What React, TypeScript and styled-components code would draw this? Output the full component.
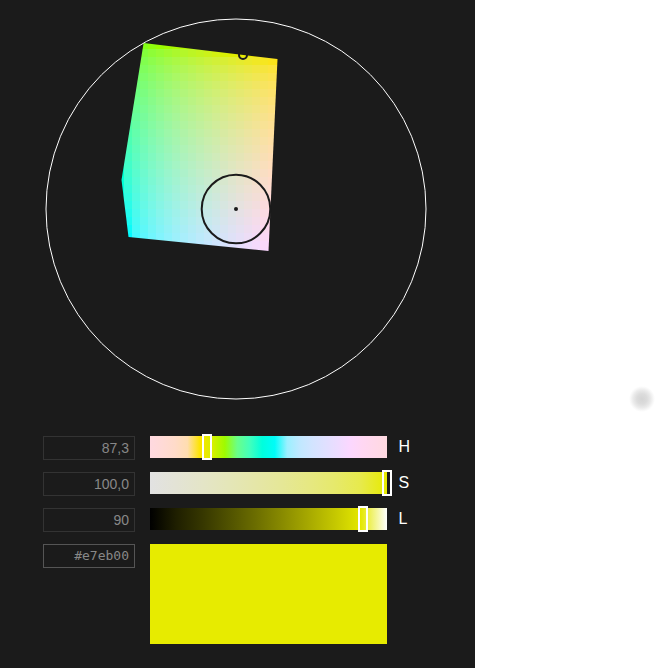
import React from "react";
import styled, { createGlobalStyle } from "styled-components";

type Vec = [number, number, number];

const M: Vec[] = [
  [3.240969941904521, -1.537383177570093, -0.498610760293],
  [-0.96924363628087, 1.87596750150772, 0.041555057407175],
  [0.055630079696993, -0.20397695888897, 1.056971514242878],
];
const REF_U = 0.19783000664283;
const REF_V = 0.46831999493879;
const KAPPA = 903.2962962;
const EPSILON = 0.0088564516;

const lToY = (l: number) => (l <= 8 ? l / KAPPA : Math.pow((l + 16) / 116, 3));

function luvToRgb(l: number, u: number, v: number): string {
  if (l <= 0.001) return "rgb(0,0,0)";
  const varU = u / (13 * l) + REF_U;
  const varV = v / (13 * l) + REF_V;
  const y = lToY(l);
  const x = (y * 9 * varU) / (4 * varV);
  const z = (9 * y - 15 * varV * y - varV * x) / (3 * varV);
  const channels = M.map((row) => {
    const c = row[0] * x + row[1] * y + row[2] * z;
    const g = c <= 0.0031308 ? 12.92 * c : 1.055 * Math.pow(c, 1 / 2.4) - 0.055;
    return Math.round(Math.min(1, Math.max(0, g)) * 255);
  });
  return `rgb(${channels.join(",")})`;
}

function maxChroma(l: number, hueDeg: number): number {
  const h = (hueDeg * Math.PI) / 180;
  const sub1 = Math.pow(l + 16, 3) / 1560896;
  const sub2 = sub1 > EPSILON ? sub1 : l / KAPPA;
  let min = Infinity;
  for (const [m1, m2, m3] of M) {
    for (const t of [0, 1]) {
      const top1 = (284517 * m1 - 94839 * m3) * sub2;
      const top2 = (838422 * m3 + 769860 * m2 + 731718 * m1) * l * sub2 - 769860 * t * l;
      const bottom = (632260 * m3 - 126452 * m2) * sub2 + 126452 * t;
      const length = top2 / bottom / (Math.sin(h) - (top1 / bottom) * Math.cos(h));
      if (length >= 0) min = Math.min(min, length);
    }
  }
  return min;
}

function hsluv(h: number, s: number, l: number): string {
  if (l >= 99.99) return "rgb(255,255,255)";
  if (l <= 0.01) return "rgb(0,0,0)";
  const c = (maxChroma(l, h) * s) / 100;
  const r = (h * Math.PI) / 180;
  return luvToRgb(l, c * Math.cos(r), c * Math.sin(r));
}

const HUE = 87.3;
const LIGHTNESS = 90;
const SQUARE = 8;
const CENTER = 200;
const SCALE = 154.2 / maxChroma(LIGHTNESS, HUE);

const gradient = (steps: number, color: (t: number) => string) =>
  `linear-gradient(to right, ${Array.from({ length: steps + 1 }, (_, i) => color(i / steps)).join(", ")})`;

const hueTrack = gradient(19, (t) => hsluv(t * 360, 100, LIGHTNESS));
const saturationTrack = gradient(9, (t) => hsluv(HUE, t * 100, LIGHTNESS));
const lightnessTrack = gradient(9, (t) => hsluv(HUE, 100, t * 100));

const squares: { x: number; y: number; fill: string }[] = [];
for (let y = 32; y < 248; y += SQUARE) {
  for (let x = 80; x < 248; x += SQUARE) {
    const u = (x + SQUARE / 2 - CENTER) / SCALE;
    const v = (CENTER - y - SQUARE / 2) / SCALE;
    squares.push({ x, y, fill: luvToRgb(LIGHTNESS, u, v) });
  }
}

const GlobalStyle = createGlobalStyle`
  body { margin: 0; background: #fff; }
  * { box-sizing: border-box; }
`;

const Page = styled.div`
  display: flex;
  width: 655px;
  height: 668px;
  overflow: hidden;
  font-family: "Liberation Sans", Arial, sans-serif;
`;

const Picker = styled.main`
  flex: 0 0 475px;
  background: #1b1b1b;
`;

const Wheel = styled.svg`
  display: block;
  width: 400px;
  height: 400px;
  margin: 9px 0 0 36px;
`;

const Controls = styled.div`
  display: grid;
  grid-template-columns: 92px 237px auto;
  grid-template-rows: 24px 24px 24px 100px;
  column-gap: 15px;
  row-gap: 12px;
  padding: 27px 0 0 43px;
`;

const Field = styled.input<{ $hex?: boolean }>`
  width: 92px;
  height: 24px;
  padding: ${({ $hex }) => ($hex ? "0 5px 2px" : "0 5px")};
  border: 1px solid ${({ $hex }) => ($hex ? "#555" : "#333")};
  border-radius: 0;
  outline: none;
  background: transparent;
  color: #888;
  font: ${({ $hex }) =>
    $hex ? '13px "DejaVu Sans Mono", monospace' : '14px "Liberation Sans", Arial, sans-serif'};
  text-align: right;
`;

const Track = styled.div<{ $fill: string }>`
  position: relative;
  height: 22px;
  background: ${({ $fill }) => $fill};
`;

const Handle = styled.span<{ $x: number }>`
  position: absolute;
  top: -2px;
  left: ${({ $x }) => $x}px;
  width: 10px;
  height: 26px;
  border: 2px solid #fff;
`;

const Label = styled.span`
  margin-left: -3.5px;
  color: #fff;
  font-size: 16px;
  line-height: 22px;
`;

const Swatch = styled.div`
  height: 100px;
  background: #e7eb00;
`;

const Aside = styled.aside`
  flex: 1;
  display: flex;
  justify-content: flex-end;
  padding: 386px 0 0;
`;

const Smudge = styled.div`
  width: 26px;
  height: 26px;
  background: radial-gradient(circle closest-side, #d4d4d4 0, #dcdcdc 40%, #eaeaea 68%, #f8f8f8 88%, #fff 100%);
`;

const sliders = [
  { label: "H", value: "87,3", track: hueTrack, x: 52 },
  { label: "S", value: "100,0", track: saturationTrack, x: 232 },
  { label: "L", value: "90", track: lightnessTrack, x: 208 },
];

export default function App() {
  return (
    <>
      <GlobalStyle />
      <Page>
        <Picker>
          <Wheel viewBox="0 0 400 400">
            <defs>
              <clipPath id="gamut">
                <polygon points="107.6,34 241.5,50 232.5,242 92.5,228 85.5,171" />
              </clipPath>
            </defs>
            <g clipPath="url(#gamut)">
              {squares.map((s) => (
                <rect key={`${s.x}-${s.y}`} x={s.x} y={s.y} width={SQUARE} height={SQUARE} fill={s.fill} shapeRendering="crispEdges" />
              ))}
            </g>
            <circle cx="200" cy="200" r="190" fill="none" stroke="#fff" />
            <circle cx="200" cy="200" r="34.3" fill="none" stroke="#1b1b1b" strokeWidth="2" />
            <circle cx="200" cy="200" r="2" fill="#1b1b1b" />
            <circle cx="207" cy="46" r="4" fill="none" stroke="#1b1b1b" strokeWidth="2" />
          </Wheel>
          <Controls>
            {sliders.map((s) => (
              <React.Fragment key={s.label}>
                <Field aria-label={s.label} defaultValue={s.value} />
                <Track $fill={s.track}>
                  <Handle $x={s.x} />
                </Track>
                <Label>{s.label}</Label>
              </React.Fragment>
            ))}
            <Field $hex aria-label="Hex" defaultValue="#e7eb00" />
            <Swatch />
          </Controls>
        </Picker>
        <Aside>
          <Smudge />
        </Aside>
      </Page>
    </>
  );
}
